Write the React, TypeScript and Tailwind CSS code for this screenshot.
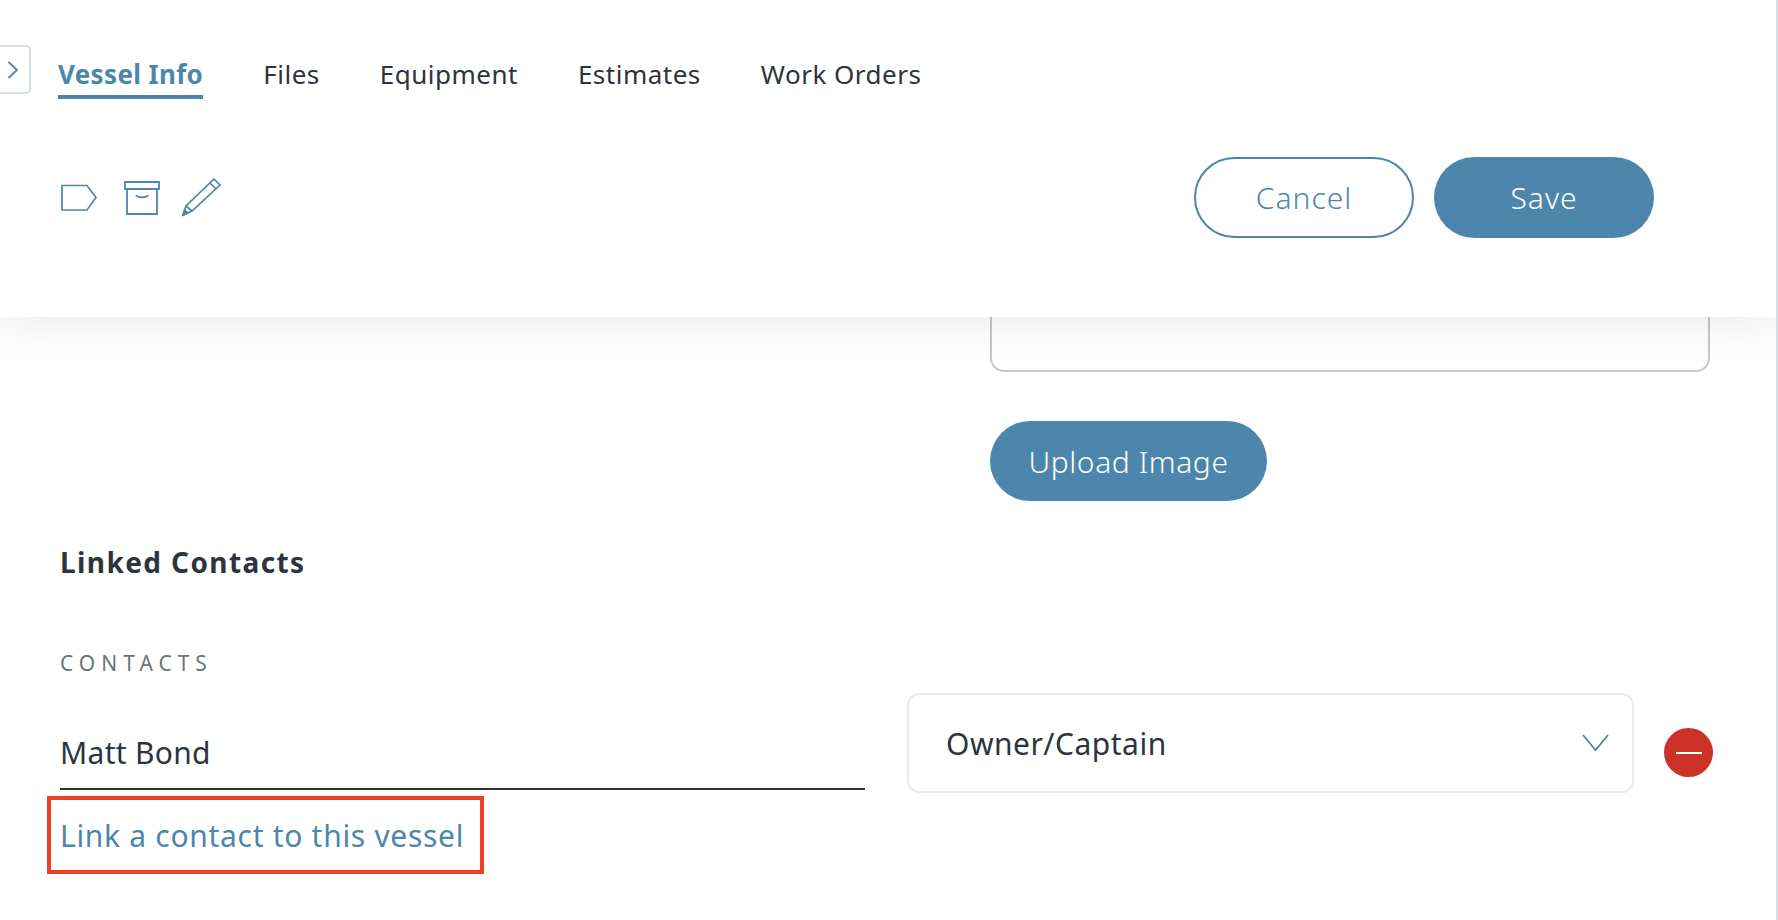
const tabs = ["Files", "Equipment", "Estimates", "Work Orders"];

function TagIcon() {
  return (
    <svg width="38" height="28" viewBox="0 0 38 28" fill="none" stroke="#4d86ad" strokeWidth="1.7">
      <path d="M2 1.5h25l9 12-9 12.5H2z" />
    </svg>
  );
}

function BoxIcon() {
  return (
    <svg width="36" height="34" viewBox="0 0 36 34" fill="none" stroke="#4d86ad" strokeWidth="1.8">
      <path d="M1 1h34v7H1z" />
      <path d="M3 8v25h30V8" />
      <path d="M12 14c1 3 11 3 12 0" />
    </svg>
  );
}

function PencilIcon() {
  return (
    <svg width="40" height="39" viewBox="0 0 40 39" fill="none" stroke="#4d86ad" strokeWidth="1.7">
      <path d="M33 1l6 6L11 33l-9 4 3-9z" />
      <path d="M29 5l6 6" />
      <path d="M5 28l6 5" />
      <path d="M2 37l1.5-5 3.5 3z" fill="#4d86ad" />
    </svg>
  );
}

export default function App() {
  return (
    <div className="h-[920px] w-[1778px] overflow-hidden border-r-2 border-[#d5dfe8] bg-white font-['Noto_Sans',sans-serif] text-[#2c3440]">
      <header className="relative z-10 h-[317px] bg-white pt-[45px] shadow-[0_12px_40px_rgba(0,0,0,0.07)]">
        <div className="flex items-start">
          <button className="flex h-[49px] w-[31px] items-center justify-start rounded-r-[5px] border-2 border-l-0 border-[#d5dfe8] pl-[7px]">
            <svg width="12" height="18" viewBox="0 0 12 18" fill="none" stroke="#4d86ad" strokeWidth="1.8">
              <path d="M1.5 1l8.5 8-8.5 8" />
            </svg>
          </button>
          <nav className="ml-[27px] mt-[11px] flex gap-[60px] text-[26px] font-normal leading-[36px] tracking-[0.5px]">
            <a className="h-[43px] border-b-4 border-[#4d86ad] font-bold tracking-[0.35px] text-[#4d86ad]">Vessel Info</a>
            {tabs.map((t) => (
              <a key={t}>{t}</a>
            ))}
          </nav>
        </div>
        <div className="mt-[58px] flex items-center justify-between pl-[60px] pr-[122px]">
          <div className="flex items-center">
            <span className="mr-[26px] flex"><TagIcon /></span>
            <span className="mr-[21px] flex"><BoxIcon /></span>
            <PencilIcon />
          </div>
          <div className="flex gap-[20px] text-[30px] font-light tracking-[1px]">
            <button className="h-[81px] w-[220px] rounded-full border-2 border-[#4d86ad] text-[#4d86ad]">Cancel</button>
            <button className="h-[81px] w-[220px] rounded-full bg-[#4d86ad] text-white">Save</button>
          </div>
        </div>
      </header>

      <main className="px-[60px]">
        <div className="ml-[930px] w-[720px]">
          <div className="h-[55px] rounded-b-[14px] border-2 border-t-0 border-[#c8c8c8]" />
          <button className="mt-[49px] h-[80px] w-[277px] rounded-full bg-[#4d86ad] text-[30px] font-light tracking-[0.6px] text-white">
            Upload Image
          </button>
        </div>

        <h2 className="mt-[43px] text-[28px] font-bold leading-[36px] tracking-[1.4px]">Linked Contacts</h2>
        <div className="mt-[71px] text-[21px] font-normal leading-[24px] tracking-[6px] text-[#6c7478]">CONTACTS</div>

        <div className="flex items-start">
          <div className="w-[805px]">
            <div className="mt-[50px] flex h-[65px] items-center border-b-2 border-[#2c3038] pb-[8px] text-[30px] font-normal tracking-[0.3px]">Matt Bond</div>
            <div className="-ml-[13px] mt-[6px] flex h-[78px] w-[437px] items-center border-4 border-[#ee4023] pl-[9px] text-[30px] font-normal tracking-[0.7px] text-[#4d86ad]">
              Link a contact to this vessel
            </div>
          </div>
          <div className="ml-[42px] mt-[18px] flex h-[100px] w-[727px] items-center justify-between rounded-[12px] border-2 border-[#e5ebef] pl-[37px] pr-[23px] text-[30px] font-normal tracking-[0.5px]">
            <span>Owner/Captain</span>
            <svg width="27" height="18" viewBox="0 0 27 18" fill="none" stroke="#4d86ad" strokeWidth="1.8">
              <path d="M1 1l12.5 15L26 1" />
            </svg>
          </div>
          <div className="ml-[30px] mt-[53px] flex h-[49px] w-[49px] items-center justify-center rounded-full bg-[#cc3128]">
            <div className="h-[2px] w-[26px] bg-white" />
          </div>
        </div>
      </main>
    </div>
  );
}
